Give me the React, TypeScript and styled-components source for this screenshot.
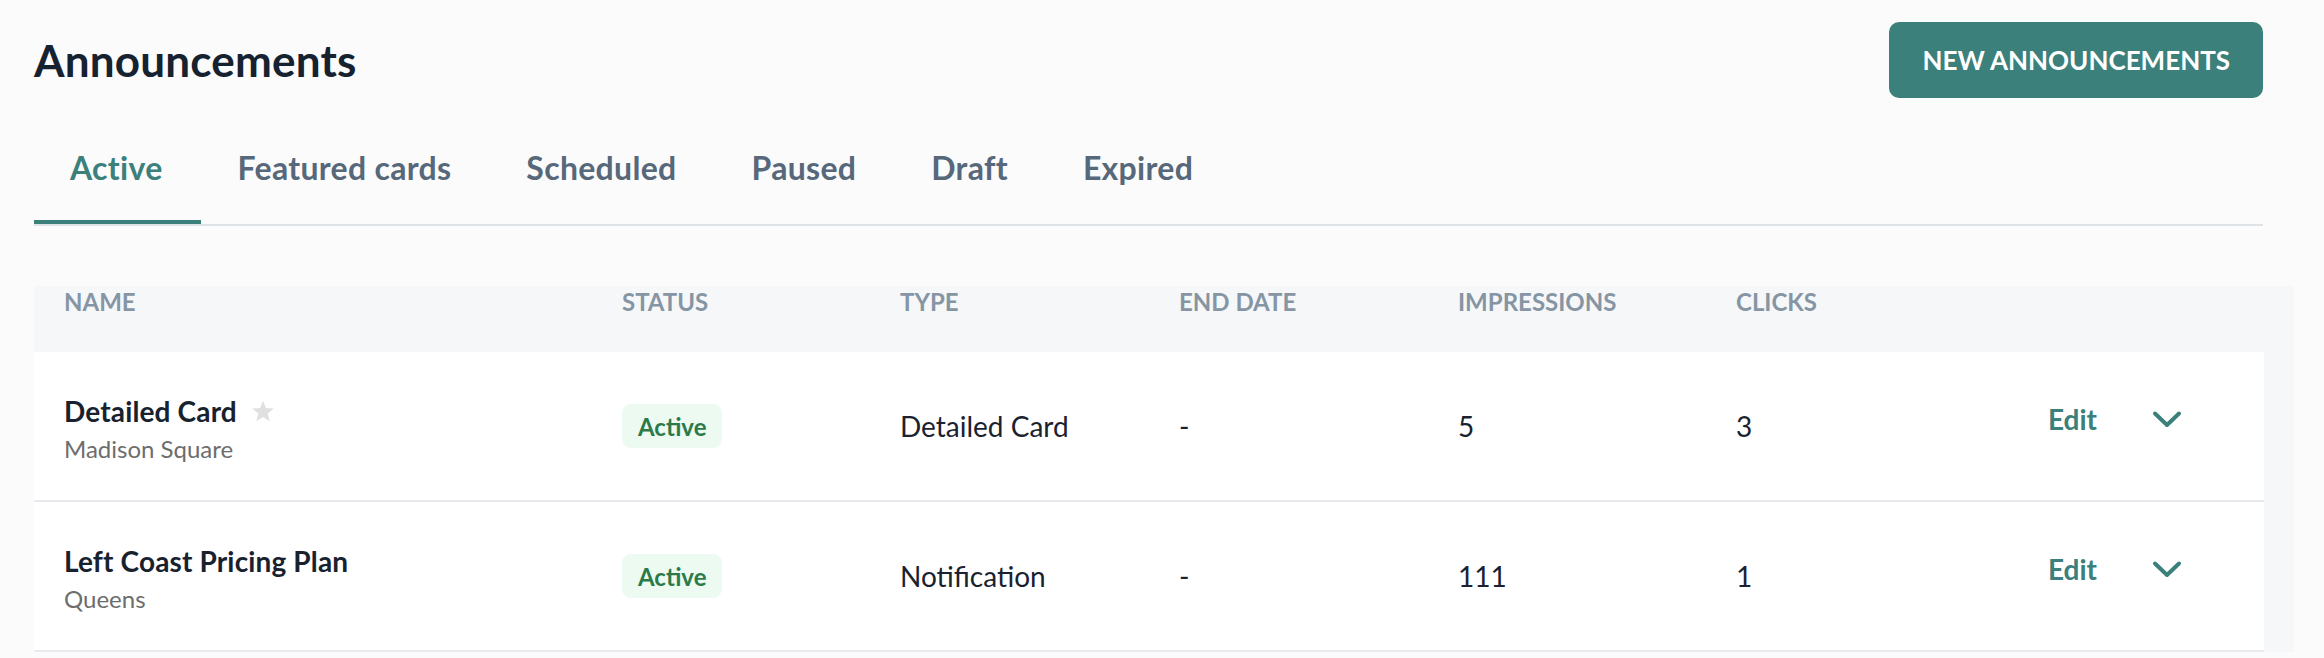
import React from "react";
import styled, { createGlobalStyle } from "styled-components";

const GlobalStyle = createGlobalStyle`
  html, body {
    margin: 0;
    padding: 0;
    background: #fbfbfc;
    font-family: Lato, "Open Sans", sans-serif;
  }
  * { box-sizing: border-box; }
`;

const TEAL = "#3b807b";

const Page = styled.div`
  padding: 22px 30px 0 34px;
`;

const HeaderBar = styled.div`
  display: flex;
  align-items: center;
  justify-content: space-between;
  margin-right: 31px;
`;

const Title = styled.h1`
  margin: 0;
  font-size: 44px;
  font-weight: 700;
  color: #16222f;
  line-height: 1.2;
  letter-spacing: 0.2px;
`;

const PrimaryButton = styled.button`
  height: 76px;
  padding: 0 33px;
  border: none;
  border-radius: 10px;
  background: ${TEAL};
  color: #ffffff;
  font-family: inherit;
  font-size: 26px;
  font-weight: 700;
  letter-spacing: 0;
  cursor: pointer;
`;

const Tabs = styled.div`
  display: flex;
  margin: 51px 31px 0 0;
  border-bottom: 2px solid #dfe3e8;
`;

const Tab = styled.div<{ $active?: boolean }>`
  padding: 0 38px 33px 36px;
  margin-right: 1px;
  font-size: 32px;
  font-weight: 700;
  line-height: 1.2;
  letter-spacing: 0.3px;
  color: ${(p) => (p.$active ? TEAL : "#56687a")};
  border-bottom: 4px solid ${(p) => (p.$active ? TEAL : "transparent")};
`;

const TableWrap = styled.div`
  margin-top: 60px;
  background: #f6f7f9;
  padding-right: 30px;
`;

const COLS = "558px 278px 279px 279px 278px 279px 1fr";

const HeadRow = styled.div`
  display: grid;
  grid-template-columns: ${COLS};
  height: 66px;
  padding: 2px 0 0 30px;
  align-items: start;
`;

const HeadCell = styled.div`
  font-size: 24px;
  font-weight: 700;
  line-height: 1.2;
  color: #8595a4;
  text-transform: uppercase;
`;

const Row = styled.div`
  display: grid;
  grid-template-columns: ${COLS};
  align-items: center;
  min-height: 150px;
  padding-left: 30px;
  background: #ffffff;
  border-bottom: 2px solid #e9eaef;
`;

const NameCell = styled.div`
  display: flex;
  flex-direction: column;
  padding-top: 6px;
`;

const NameLine = styled.div`
  display: flex;
  align-items: center;
  gap: 14px;
`;

const RowTitle = styled.div`
  font-size: 28px;
  font-weight: 700;
  line-height: 1.2;
  letter-spacing: 0.15px;
  color: #18222f;
`;

const RowSub = styled.div`
  margin-top: 6px;
  font-size: 24px;
  font-weight: 400;
  line-height: 1.2;
  color: #6d6d6d;
`;

const Badge = styled.span`
  justify-self: start;
  display: inline-flex;
  align-items: center;
  height: 44px;
  padding: 0 16px;
  border-radius: 9px;
  background: #edfaf1;
  color: #2c7a4a;
  font-size: 24px;
  font-weight: 700;
`;

const Cell = styled.div`
  font-size: 28px;
  font-weight: 400;
  line-height: 1.2;
  color: #1a2230;
`;

const Actions = styled.div`
  display: flex;
  align-items: center;
  gap: 54px;
  padding-left: 33px;
  padding-bottom: 14px;
`;

const EditLink = styled.span`
  font-size: 28px;
  font-weight: 700;
  line-height: 1.2;
  color: ${TEAL};
  cursor: pointer;
`;

const Chevron = () => (
  <svg width="32" height="19" viewBox="0 0 32 19" fill="none">
    <path
      d="M4 3.5 L16 15 L28 3.5"
      stroke={TEAL}
      strokeWidth="4"
      strokeLinecap="round"
      strokeLinejoin="round"
    />
  </svg>
);

const Star = () => (
  <svg width="24" height="23" viewBox="0 0 24 23">
    <path
      d="M12 0.8 L14.9 8.1 L22.8 8.5 L16.7 13.5 L18.7 21.3 L12 16.9 L5.3 21.3 L7.3 13.5 L1.2 8.5 L9.1 8.1 Z"
      fill="#e0e0e0"
    />
  </svg>
);

type Item = {
  name: string;
  location: string;
  featured: boolean;
  type: string;
  end: string;
  impressions: number;
  clicks: number;
};

const items: Item[] = [
  {
    name: "Detailed Card",
    location: "Madison Square",
    featured: true,
    type: "Detailed Card",
    end: "-",
    impressions: 5,
    clicks: 3,
  },
  {
    name: "Left Coast Pricing Plan",
    location: "Queens",
    featured: false,
    type: "Notification",
    end: "-",
    impressions: 111,
    clicks: 1,
  },
];

const tabs = ["Active", "Featured cards", "Scheduled", "Paused", "Draft", "Expired"];
const heads = ["Name", "Status", "Type", "End date", "Impressions", "Clicks", ""];

export default function App() {
  return (
    <>
      <GlobalStyle />
      <Page>
        <HeaderBar>
          <Title>Announcements</Title>
          <PrimaryButton>NEW ANNOUNCEMENTS</PrimaryButton>
        </HeaderBar>
        <Tabs>
          {tabs.map((t, i) => (
            <Tab key={t} $active={i === 0}>
              {t}
            </Tab>
          ))}
        </Tabs>
        <TableWrap>
          <HeadRow>
            {heads.map((h, i) => (
              <HeadCell key={i}>{h}</HeadCell>
            ))}
          </HeadRow>
          {items.map((it) => (
            <Row key={it.name}>
              <NameCell>
                <NameLine>
                  <RowTitle>{it.name}</RowTitle>
                  {it.featured && <Star />}
                </NameLine>
                <RowSub>{it.location}</RowSub>
              </NameCell>
              <Badge>Active</Badge>
              <Cell>{it.type}</Cell>
              <Cell>{it.end}</Cell>
              <Cell>{it.impressions}</Cell>
              <Cell>{it.clicks}</Cell>
              <Actions>
                <EditLink>Edit</EditLink>
                <Chevron />
              </Actions>
            </Row>
          ))}
        </TableWrap>
      </Page>
    </>
  );
}
